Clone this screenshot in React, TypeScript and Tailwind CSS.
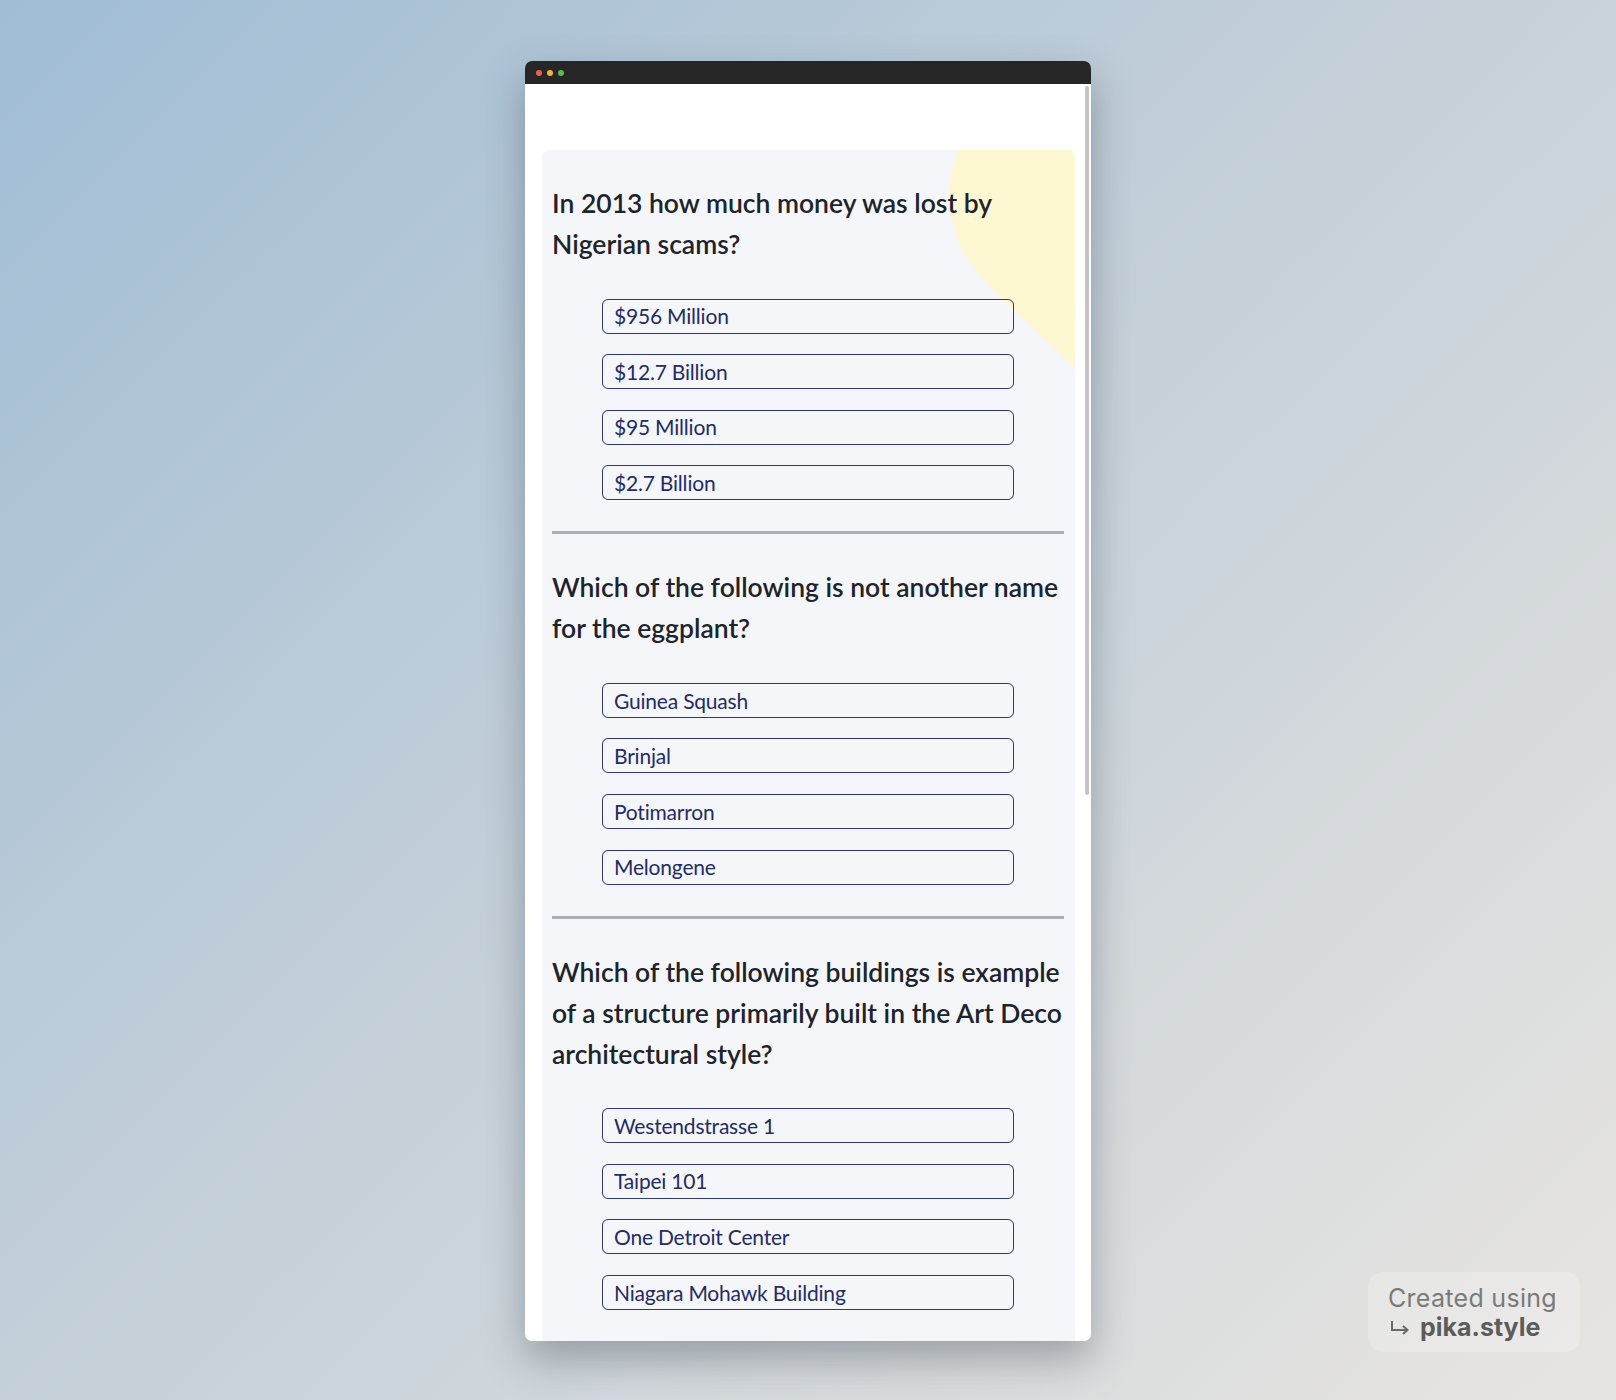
import React from "react";

const questions = [
  {
    q: "In 2013 how much money was lost by Nigerian scams?",
    a: ["$956 Million", "$12.7 Billion", "$95 Million", "$2.7 Billion"],
  },
  {
    q: "Which of the following is not another name for the eggplant?",
    a: ["Guinea Squash", "Brinjal", "Potimarron", "Melongene"],
  },
  {
    q: "Which of the following buildings is example of a structure primarily built in the Art Deco architectural style?",
    a: ["Westendstrasse 1", "Taipei 101", "One Detroit Center", "Niagara Mohawk Building"],
  },
];

export default function App() {
  return (
    <div className="relative min-h-[1400px] w-full bg-[linear-gradient(135deg,#a0bdd5_0%,#c3cfd9_45%,#e8e5e1_100%)] flex justify-center pt-[61px]">
      <div className="w-[566px] h-[1280px] rounded-[7px] overflow-hidden bg-white shadow-[0_18px_40px_rgba(40,50,60,0.35)] flex flex-col">
        <div className="h-[23px] shrink-0 bg-[#262626] flex items-center gap-[5px] pl-[11px]">
          <div className="w-[6px] h-[6px] rounded-full bg-[#ee5f57]" />
          <div className="w-[6px] h-[6px] rounded-full bg-[#f3b23e]" />
          <div className="w-[6px] h-[6px] rounded-full bg-[#58c04f]" />
        </div>
        <div className="flex flex-1 min-h-0">
          <div className="flex-1 pl-[17px] pr-[8px] pt-[66px] overflow-hidden">
            <div className="relative overflow-hidden rounded-[6px] bg-[#f5f6fa] pl-[10px] pr-[11px] pb-[40px]">
              <svg
                className="absolute top-0 right-0"
                width="140"
                height="230"
                viewBox="393 0 140 230"
              >
                <path
                  d="M 416 0 C 404 30, 402 80, 432 118 C 458 150, 500 185, 533 218 L 533 0 Z"
                  fill="#fef8d2"
                />
              </svg>
              {questions.map((item, i) => (
                <div key={i} className="relative">
                  {i > 0 && <div className="h-[3px] bg-[#abaeb4] mt-[31px]" />}
                  <div
                    className="pt-[33px] text-[26.5px] leading-[41px] font-semibold text-[#202329]"
                    style={{ fontFamily: "Lato, 'Open Sans', sans-serif" }}
                  >
                    {item.q}
                  </div>
                  <div className="mt-[33.5px] flex flex-col gap-[20.6px] items-center">
                    {item.a.map((opt) => (
                      <div
                        key={opt}
                        className="w-[412px] h-[35px] rounded-[6px] border-[1.5px] border-[#2f3870] flex items-center pl-[11px] text-[21px] tracking-[-0.2px] text-[#232c63]"
                        style={{ fontFamily: "Lato, 'Open Sans', sans-serif" }}
                      >
                        {opt}
                      </div>
                    ))}
                  </div>
                </div>
              ))}
            </div>
          </div>
          <div className="w-[8px] shrink-0 pt-[2px] pl-[2px]">
            <div className="w-[4px] h-[709px] rounded-full bg-[#c4c4c4]" />
          </div>
        </div>
      </div>

      <div
        className="absolute left-[1368px] top-[1272px] w-[212px] h-[80px] rounded-[14px] bg-[rgba(255,255,255,0.22)] pl-[20px] pt-[12px]"
        style={{ fontFamily: "Inter, 'Liberation Sans', sans-serif" }}
      >
        <div className="text-[25px] leading-[29px] text-[#7a7a7a] tracking-[0.3px]">Created using</div>
        <div className="flex items-center gap-[9px] leading-[29px]">
          <svg width="22" height="16" viewBox="0 0 22 16" className="ml-[1px]">
            <path d="M3 1 V10 H18" fill="none" stroke="#6a6a6a" strokeWidth="2" />
            <path d="M14 6 L18.5 10 L14 14" fill="none" stroke="#6a6a6a" strokeWidth="2" />
          </svg>
          <span className="text-[25px] font-bold text-[#5c5c5c]">pika.style</span>
        </div>
      </div>
    </div>
  );
}
